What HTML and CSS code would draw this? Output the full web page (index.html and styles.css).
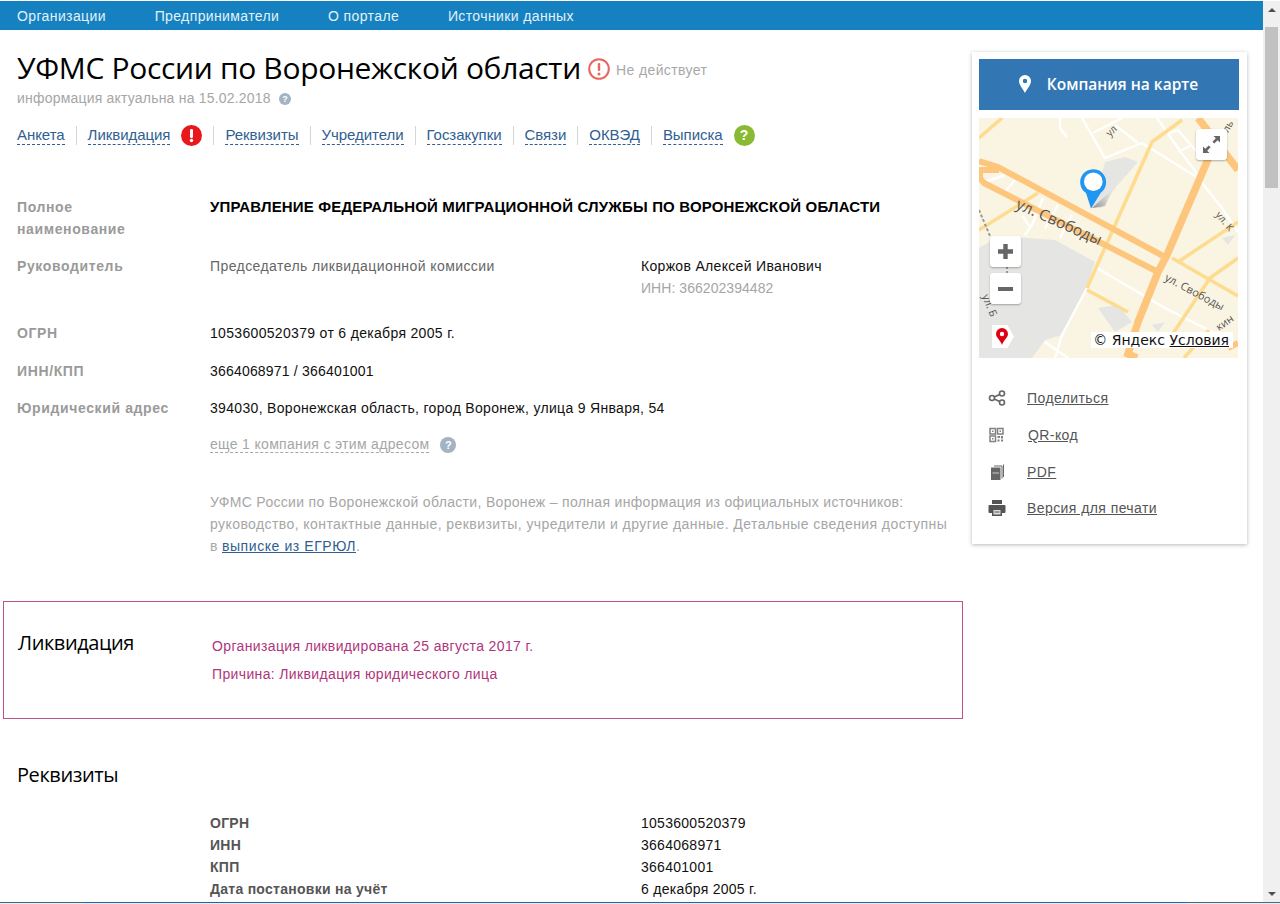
FILE: index.html
```html
<!DOCTYPE html>
<html lang="ru">
<head>
<meta charset="utf-8">
<title>УФМС России по Воронежской области</title>
<link rel="stylesheet" href="styles.css">
</head>
<body>
<div class="page">
  <div class="viewport">
    <nav class="topbar">
      <a>Организации</a><a>Предприниматели</a><a>О портале</a><a>Источники данных</a>
    </nav>
    <div class="columns">
      <main class="main">
        <div class="title-row">
          <h1>УФМС России по Воронежской области</h1>
          <svg class="warn" width="22" height="22" viewBox="0 0 22 22"><circle cx="11" cy="11" r="9.800" fill="none" stroke="#e8665f" stroke-width="2"/><rect x="9.800" y="5" width="2.400" height="8" rx="1" fill="#e8665f"/><circle cx="11" cy="16" r="1.500" fill="#e8665f"/></svg>
          <span class="status">Не действует</span>
        </div>
        <div class="actual">информация актуальна на 15.02.2018 <span class="q q-small">?</span></div>
        <div class="tabs">
          <span class="tab"><a>Анкета</a></span>
          <span class="tab"><a>Ликвидация</a><svg class="tab-ico" width="21" height="21" viewBox="0 0 21 21"><circle cx="10.500" cy="10.500" r="10.500" fill="#e8171b"/><rect x="9" y="4" width="3" height="9" rx="1.200" fill="#fff"/><circle cx="10.500" cy="15.500" r="1.700" fill="#fff"/></svg></span>
          <span class="tab"><a>Реквизиты</a></span>
          <span class="tab"><a>Учредители</a></span>
          <span class="tab"><a>Госзакупки</a></span>
          <span class="tab"><a>Связи</a></span>
          <span class="tab"><a>ОКВЭД</a></span>
          <span class="tab"><a>Выписка</a><span class="q q-green">?</span></span>
        </div>
        <section class="info">
          <div class="row row-name"><div class="label">Полное наименование</div><div class="strong">УПРАВЛЕНИЕ ФЕДЕРАЛЬНОЙ МИГРАЦИОННОЙ СЛУЖБЫ ПО ВОРОНЕЖСКОЙ ОБЛАСТИ</div></div>
          <div class="row row-head"><div class="label">Руководитель</div><div class="post">Председатель ликвидационной комиссии</div><div class="person">Коржов Алексей Иванович<div class="inn">ИНН: 366202394482</div></div></div>
          <div class="row row-ogrn"><div class="label">ОГРН</div><div>1053600520379 от 6 декабря 2005 г.</div></div>
          <div class="row row-inn"><div class="label">ИНН/КПП</div><div class="inn-kpp">3664068971 / 366401001</div></div>
          <div class="row row-addr"><div class="label">Юридический адрес</div><div>394030, Воронежская область, город Воронеж, улица 9 Января, 54</div></div>
          <div class="row row-same"><div class="label"></div><div><a class="same">еще 1 компания с этим адресом</a><span class="q q-mid">?</span></div></div>
          <div class="row row-desc"><div class="label"></div><p>УФМС России по Воронежской области, Воронеж – полная информация из официальных источников:<br><span class="desc-wide">руководство, контактные данные, реквизиты, учредители и другие данные. Детальные сведения доступны</span><br>в <a>выписке из ЕГРЮЛ</a>.</p></div>
        </section>
        <section class="liq">
          <h2>Ликвидация</h2>
          <div class="liq-text"><div>Организация ликвидирована 25 августа 2017 г.</div><div>Причина: Ликвидация юридического лица</div></div>
        </section>
        <section class="req">
          <h2>Реквизиты</h2>
          <dl>
            <dt>ОГРН</dt><dd>1053600520379</dd>
            <dt>ИНН</dt><dd>3664068971</dd>
            <dt>КПП</dt><dd>366401001</dd>
            <dt>Дата постановки на учёт</dt><dd>6 декабря 2005 г.</dd>
          </dl>
        </section>
      </main>
      <aside class="side">
        <div class="card">
          <div class="map-btn"><svg width="12" height="18" viewBox="0 0 12 18"><path fill="#fff" fill-rule="evenodd" d="M6 0a6 6 0 0 1 6 6c0 4-4 8-6 12C4 14 0 10 0 6a6 6 0 0 1 6-6zm0 3.800a2.200 2.200 0 1 0 0 4.400 2.200 2.200 0 0 0 0-4.400z"/></svg><span>Компания на карте</span></div>
          <div class="map">
            <svg class="map-svg" width="259" height="240" viewBox="0 0 259 240">
              <defs><linearGradient id="pin-shadow" x1="0" y1="1" x2="1" y2="0"><stop offset="0" stop-color="#8a8a8a"/><stop offset="1" stop-color="#cfcfcf" stop-opacity="0"/></linearGradient></defs>
              <rect width="259" height="240" fill="#faf4e2"/>
              <g fill="#e5e5e3">
                <path d="M20 118 76 122 116 144 107 170 83 217 66 222 53 240H0V130z"/>
                <path d="M126 44 146 39 159 44 136 70 123 90H113z"/>
                <path d="M119 190 139 187 153 204 136 214z"/>
                <path d="M173 207 186 204 179 214z"/>
                <path d="M243 120 256 117 249 127z"/>
              </g>
              <g fill="none" stroke="#fff" stroke-width="2.400">
                <path d="M103 0 126 40 163 25 219 60 243 90 259 114"/>
                <path d="M114 15 143 0M136 7 159 25"/>
                <path d="M178 0 199 30 219 57M189 15 199 12 223 40M199 34 213 27"/>
                <path d="M81 0V10L88 19"/>
                <path d="M118 150 186 190 259 227"/>
                <path d="M108 170 83 217 76 240M66 224 89 240"/>
                <path d="M26 74 36 62M6 64 26 57M64 80 53 107 46 117M79 87 66 110M93 97 81 120M43 97 51 109"/>
              </g>
              <g fill="none" stroke="#fddc8f" stroke-width="3.500">
                <path d="M0 20 23 0"/>
                <path d="M108 170 173 24 203 2"/>
                <path d="M108 172 149 194"/>
                <path d="M0 112 59 75"/>
                <path d="M193 140 259 178"/>
                <path d="M199 144 259 104"/>
                <path d="M193 217 231 160 259 140"/>
                <path d="M205 240 230 212"/>
              </g>
              <g fill="none" stroke="#fdc67c" stroke-width="6">
                <path d="M0 43 19 49 186 139"/>
                <path d="M0 52H20"/>
                <path d="M1 50V60L5 65 179 154"/>
                <path d="M249 230 259 225"/>
              </g>
              <g fill="none" stroke="#fdc67c" stroke-width="7.500">
                <path d="M219 0 259 52"/>
                <path d="M233 32 188 137 179 154 159 204 149 236 158 240"/>
              </g>
              <path d="M0 92 11 118M28 148V156" fill="none" stroke="#9a9a9a" stroke-width="2" stroke-dasharray="3 2"/>
              <polygon points="113,90 134,71 126,88" fill="url(#pin-shadow)"/>
              <g class="map-label">
                <text transform="translate(36 90) rotate(24)" font-size="15.500">ул. Свободы</text>
                <text transform="translate(185 162) rotate(28)" font-size="11">ул. Свободы</text>
                <text transform="translate(236 97) rotate(50)" font-size="10">ул. К</text>
                <text transform="translate(131 19) rotate(-45)" font-size="10">ул</text>
                <text transform="translate(249 15) rotate(-60)" font-size="10">ль</text>
                <text transform="translate(3 178) rotate(68)" font-size="10.500">ул. Б</text>
                <text transform="translate(240 213) rotate(-35)" font-size="10.500">кин</text>
              </g>
              <path class="pin" d="M112 90.500 107 75A13 13 0 1 1 122 74.500Z"/>
              <circle cx="114.300" cy="63.700" r="9.300" fill="#fff"/>
            </svg>
            <div class="map-ctl map-full"><svg width="17" height="17" viewBox="0 0 17 17"><path fill="#666" d="M10.500 0H17V6.500L14.700 4.200 11.300 7.600 9.400 5.700 12.800 2.300ZM6.500 17H0V10.500L2.300 12.800 5.700 9.400 7.600 11.300 4.200 14.700Z"/></svg></div>
            <div class="map-ctl map-plus"><svg width="15" height="15" viewBox="0 0 15 15"><path fill="#666" d="M5.300 0h4.400v5.300H15v4.400H9.700V15H5.300V9.700H0V5.300h5.300z"/></svg></div>
            <div class="map-ctl map-minus"><svg width="15" height="4" viewBox="0 0 15 4"><rect width="15" height="4" fill="#666"/></svg></div>
            <div class="map-geo"><svg width="12" height="17" viewBox="0 0 12 17"><path fill="#e00012" fill-rule="evenodd" d="M6 0a6 6 0 0 1 6 6c0 3.500-4 5.500-6 11C4 11.500 0 9.500 0 6a6 6 0 0 1 6-6zm0 3.800a2.200 2.200 0 1 0 0 4.400 2.200 2.200 0 0 0 0-4.400z"/></svg></div>
            <div class="map-copy">© Яндекс <u>Условия</u></div>
          </div>
          <ul class="actions">
            <li><svg width="18" height="18" viewBox="0 0 18 18"><g fill="none" stroke="#666" stroke-width="1.600"><circle cx="14" cy="4.500" r="2.500"/><circle cx="14" cy="13.500" r="2.500"/><circle cx="4" cy="9" r="2.500"/><path d="M6.200 8 11.700 5.500M6.200 10 11.700 12.500"/></g></svg><a>Поделиться</a></li>
            <li><svg width="18" height="18" viewBox="0 0 18 18"><g fill="none" stroke="#808080" stroke-width="1.500"><rect x="2" y="2.500" width="5.500" height="5.500"/><rect x="9.500" y="2.500" width="5.500" height="5.500"/><rect x="2" y="10" width="5.500" height="5.500"/></g><path fill="#808080" d="M4 4.500h1.500V6H4zM11.500 4.500H13V6h-1.500zM4 12h1.500v1.500H4zM9.500 10H12v2H9.500zM13 10h2v2.500h-2zM9.500 13.500h2v2h-2zM13 13.500h2v2h-2z"/></svg><a class="qr">QR-код</a></li>
            <li><svg width="18" height="18" viewBox="0 0 18 18"><path fill="#666" d="M3 4.500h9.500V17H3z"/><path fill="none" stroke="#666" d="M14 3V15.500M6 3H14M15.500 1.500V14"/><path fill="#ccc" d="M4.500 9.500h6.500v1H4.500z"/></svg><a>PDF</a></li>
            <li><svg width="18" height="18" viewBox="0 0 18 18"><path fill="#555" d="M4 1h10v4H4zM1.500 6h15a1 1 0 0 1 1 1v6a1 1 0 0 1-1 1H14v3H4v-3H1.500a1 1 0 0 1-1-1V7a1 1 0 0 1 1-1z"/><path fill="#ddd" d="M5.500 11h7v4.500h-7z"/><path fill="#555" d="M6.500 12.500h5v1h-5z"/></svg><a>Версия для печати</a></li>
          </ul>
        </div>
      </aside>
    </div>
  </div>
  <div class="scrollbar">
    <span class="sb-arrow sb-up"></span>
    <span class="sb-thumb"></span>
    <span class="sb-arrow sb-down"></span>
  </div>
  <div class="taskline"></div>
</div>
</body>
</html>
```
FILE: styles.css
```css
* { box-sizing: border-box; }
html, body { margin: 0; height: 100%; overflow: hidden; background: #fff; }
body { font: 14px/22px "Liberation Sans", Arial, sans-serif; color: #000; }
a { color: inherit; }
.page { display: flex; height: 904px; position: relative; overflow: hidden; }
.viewport { width: 1263px; flex: none; overflow: hidden; }
.scrollbar { flex: 1; background: #f0f0f0; display: flex; flex-direction: column; align-items: center; height: 902px; margin-top: 1px; }
.sb-thumb { width: 13px; height: 161px; background: #c1c1c1; margin-top: 15px; flex: none; }
.sb-arrow { width: 0; height: 0; border-left: 4px solid transparent; border-right: 4px solid transparent; flex: none; }
.sb-up { border-bottom: 4px solid #505050; margin-top: 7px; }
.sb-down { border-top: 4px solid #505050; margin-top: auto; margin-bottom: 7px; }
.taskline { position: absolute; left: 0; right: 0; bottom: 0; height: 2px; background: linear-gradient(90deg, #47666f 0 83px, #2a5fb0 83px 1187px, #4a6a7a 1187px) 0 0 / 100% 1px no-repeat, #e6eef6; }

.topbar { margin-top: 1px; height: 29px; background: #1581c0; padding-left: 17px; display: flex; gap: 48.800px; line-height: 31px; color: #e3f1f9; letter-spacing: .38px; }

.columns { display: flex; }
.main { width: 963px; flex: none; }
.title-row { display: flex; align-items: center; margin-top: 19px; padding-left: 17px; height: 40px; }
h1 { margin: 0 0 2px; font: 400 30px/38px "Open Sans", sans-serif; letter-spacing: -.33px; color: #000; }
.warn { margin-left: 7px; }
.status { margin-left: 6px; color: #a8a8a8; letter-spacing: .4px; padding-top: 2px; }
.actual { padding-left: 17px; color: #a6a6a6; line-height: 18px; letter-spacing: .2px; }
.q { display: inline-block; border-radius: 50%; color: #fff; text-align: center; font-weight: 700; vertical-align: middle; letter-spacing: 0; }
.q-small { width: 12px; height: 12px; line-height: 12px; font-size: 9px; background: #a3b3c4; margin-left: 4px; }
.q-mid { width: 16px; height: 16px; line-height: 16px; font-size: 11px; background: #a3b3c4; margin-left: 11px; }
.q-green { width: 21px; height: 21px; line-height: 21px; font-size: 14px; background: #8ab933; margin-left: 11px; }
.tabs { display: flex; align-items: center; padding-left: 17px; margin-top: 17px; height: 22px; color: #2f6090; font-size: 15px; letter-spacing: -.05px; }
.tab { display: flex; align-items: center; height: 19px; padding-right: 11px; margin-right: 11px; border-right: 1px solid #d6d6d6; }
.tab:last-child { border: 0; }
.tab a { border-bottom: 1px dashed #2f6090; line-height: 18px; }
.tab-ico { margin-left: 11px; }

.info { padding-left: 17px; padding-right: 16px; margin-top: 50px; color: #111; letter-spacing: .32px; }
.row { display: flex; }
.label { width: 193px; flex: none; font-weight: 700; color: #9a9a9a; padding-right: 40px; letter-spacing: .62px; }
.strong { font-weight: 700; color: #000; font-size: 15px; letter-spacing: .17px; }
.row-name { height: 59px; }
.row-head { height: 67px; }
.row-ogrn { height: 38px; }
.row-inn { height: 37px; }
.row-addr { height: 36px; }
.row-same { height: 58px; }
.inn-kpp { letter-spacing: .19px; }
.post { width: 431px; flex: none; color: #666; letter-spacing: .42px; }
.inn { color: #a6a6a6; letter-spacing: .05px; }
.same { color: #a6a6a6; border-bottom: 1px dashed #a6a6a6; }
.row-desc p { margin: 0; color: #a6a6a6; line-height: 22px; width: 745px; white-space: nowrap; }
.desc-wide { letter-spacing: .42px; }
.row-desc a { color: #2f6090; text-decoration: underline; letter-spacing: .57px; }

.liq { margin-top: 44px; margin-left: 3px; width: 960px; height: 118px; border: 1px solid #c0518a; display: flex; padding: 27px 0 0 14px; }
h2 { margin: 0; font: 400 20px/28px "Open Sans", sans-serif; letter-spacing: -.42px; color: #000; }
.liq h2 { width: 194px; flex: none; }
.liq-text { color: #b0357c; line-height: 28px; padding-top: 3px; letter-spacing: .36px; }

.req { padding-left: 17px; margin-top: 42px; }
dl { display: grid; grid-template-columns: 431px 1fr; margin: 23px 0 0 193px; letter-spacing: .27px; }
dt { font-weight: 700; color: #555; }
dd { margin: 0; color: #111; }

.side { width: 275px; margin-left: 9px; margin-top: 22px; flex: none; }
.card { background: #fff; height: 492px; padding: 7px 8px 7px 7px; box-shadow: 0 1px 4px rgba(0,0,0,.28); }
.map-btn { height: 51px; background: #3277b3; color: #fff; display: flex; align-items: center; justify-content: center; gap: 16px; font: 600 15.500px/20px "Open Sans", sans-serif; padding: 0 1px 2px 0; }
.map { margin-top: 8px; width: 259px; height: 240px; position: relative; overflow: hidden; }
.map-svg { display: block; }
.map-label { font-family: "Open Sans", sans-serif; fill: #555; }
.pin { fill: #2196f0; }
.map-ctl { position: absolute; width: 31px; height: 31px; background: #fff; border-radius: 3px; box-shadow: 0 1px 2px rgba(0,0,0,.3); display: flex; align-items: center; justify-content: center; }
.map-full { left: 217px; top: 11px; }
.map-plus { left: 11px; top: 118px; }
.map-minus { left: 11px; top: 155px; }
.map-geo { position: absolute; left: 13px; top: 207px; width: 22px; height: 23px; background: #fff; clip-path: polygon(0 0, 70% 0, 100% 50%, 70% 100%, 0 100%); display: flex; align-items: center; justify-content: center; padding-right: 3px; }
.map-copy { position: absolute; right: 5px; top: 214px; height: 16px; background: #fff; padding: 0 4px 0 2px; font: 14px/16px "DejaVu Sans", sans-serif; color: #111; white-space: nowrap; }
.actions { list-style: none; margin: 22px 0 0; padding: 0 0 0 9px; color: #555; letter-spacing: .42px; }
.actions li { display: flex; align-items: center; height: 36.700px; gap: 21px; }
.actions a { text-decoration: underline; }
.actions .qr { margin-left: 1px; }
```
